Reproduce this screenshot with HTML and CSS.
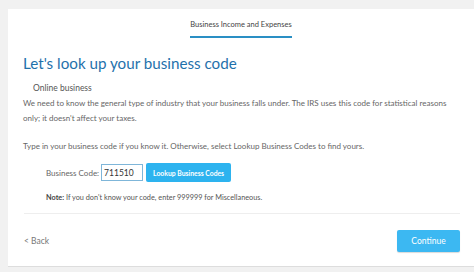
FILE: index.html
```html
<!DOCTYPE html>
<html>

<head>
  <title>Business Income and Expenses</title>
  <link rel="stylesheet" href="styles.css">
</head>

<body>
  <div class="card">
    <div class="tabs">
      <span class="tab active">Business Income and Expenses</span>
    </div>

    <div class="content">
      <h1>Let's look up your business code</h1>
      <p class="subtitle">Online business</p>
      <p class="text">We need to know the general type of industry that your business falls under. The IRS uses this code for statistical reasons only; it doesn't affect your taxes.</p>
      <p class="text last">Type in your business code if you know it. Otherwise, select Lookup Business Codes to find yours.</p>

      <div class="code-row">
        <label for="code">Business Code:</label>
        <input type="text" id="code" value="711510">
        <button class="lookup-button">Lookup Business Codes</button>
      </div>

      <p class="note"><b>Note:</b> If you don't know your code, enter 999999 for Miscellaneous.</p>
    </div>

    <div class="footer">
      <a class="back" href="#">&lt; Back</a>
      <button class="continue-button">Continue</button>
    </div>
  </div>
</body>

</html>
```

FILE: styles.css
```css
body {
  font-family: Lato, "Noto Sans", sans-serif;
  margin: 0;
  padding: 9px 0 0 8px;
  background-color: #f1f1f1;
  color: #666;
}

.card {
  background-color: #fff;
  height: 258px;
  box-sizing: border-box;
  border-bottom: 1px solid #ddd;
  display: flex;
  flex-direction: column;
}

.tabs {
  display: flex;
  justify-content: center;
  padding-top: 11px;
}

.tab {
  font-size: 7.5px;
  color: #444;
  padding-bottom: 7px;
  border-bottom: 2px solid #2a8fc4;
}

.content {
  padding: 0 14px 0 15px;
}

h1 {
  font-size: 15.2px;
  font-weight: normal;
  color: #1f71ab;
  margin: 16px 0 11px;
}

.subtitle {
  font-size: 8.5px;
  color: #555;
  margin: 0 0 3px 10px;
}

.text {
  font-size: 8px;
  line-height: 15px;
  color: #666;
  margin: 0 0 13px;
}

.text.last {
  margin-bottom: 9px;
}

.code-row {
  display: flex;
  align-items: center;
  margin-left: 23px;
}

.code-row label {
  font-size: 8px;
  color: #666;
  margin-right: 2px;
}

.code-row input {
  width: 42px;
  height: 17px;
  box-sizing: border-box;
  border: 1px solid #7fb6d9;
  padding: 0 2px;
  font-family: inherit;
  font-size: 8.5px;
  color: #333;
}

.lookup-button {
  margin-left: 3px;
  height: 19px;
  padding: 0 7px;
  border: none;
  border-radius: 2px;
  background-color: #2db3ef;
  color: #fff;
  font-family: inherit;
  font-size: 6.8px;
  font-weight: bold;
}

.note {
  font-size: 7.3px;
  color: #555;
  margin: 11px 0 0 23px;
}

.note b {
  color: #444;
}

.footer {
  margin: auto 14px 0 16px;
  border-top: 1px solid #eee;
  display: flex;
  justify-content: space-between;
  align-items: center;
  padding: 16px 0 14px;
}

.back {
  font-size: 8.5px;
  color: #777;
  text-decoration: none;
}

.continue-button {
  width: 63px;
  height: 22px;
  border: none;
  border-radius: 2px;
  background-color: #3cb8f2;
  color: #fff;
  font-family: inherit;
  font-size: 8.5px;
  box-shadow: 0 1px 1px rgba(0, 0, 0, 0.15);
}
```
